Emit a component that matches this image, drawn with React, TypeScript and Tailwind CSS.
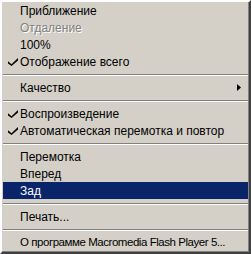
import React from "react";

type Item =
  | { type: "sep" }
  | {
      type: "item";
      label: string;
      checked?: boolean;
      disabled?: boolean;
      active?: boolean;
      submenu?: boolean;
      tight?: boolean;
    };

const items: Item[] = [
  { type: "item", label: "Приближение" },
  { type: "item", label: "Отдаление", disabled: true },
  { type: "item", label: "100%" },
  { type: "item", label: "Отображение всего", checked: true },
  { type: "sep" },
  { type: "item", label: "Качество", submenu: true },
  { type: "sep" },
  { type: "item", label: "Воспроизведение", checked: true },
  { type: "item", label: "Автоматическая перемотка и повтор", checked: true },
  { type: "sep" },
  { type: "item", label: "Перемотка" },
  { type: "item", label: "Вперед" },
  { type: "item", label: "Зад", active: true },
  { type: "sep" },
  { type: "item", label: "Печать..." },
  { type: "sep" },
  { type: "item", label: "О программе Macromedia Flash Player 5...", tight: true },
];

function Check() {
  return (
    <svg width="10" height="8" viewBox="0 0 10 8" className="absolute left-[5px] top-[5px]">
      <path d="M0 3.2 L3.5 6.2 L10 0 L10 2.6 L3.5 8 L0 5.4 Z" fill="#000" />
    </svg>
  );
}

function Arrow() {
  return (
    <svg width="4" height="7" viewBox="0 0 4 7" className="absolute right-[7px] top-[5px]">
      <path d="M0 0 L4 3.5 L0 7 Z" fill="#000" />
    </svg>
  );
}

export default function App() {
  return (
    <div
      className="w-[251px] h-[254px] bg-[#d4d0c8] border-t-2 border-l-2 border-r-2 border-b-2 border-t-white border-l-white border-r-[#404040] border-b-[#404040] overflow-hidden"
      style={{ fontFamily: '"Liberation Sans", Arial, sans-serif' }}
    >
      <div className="h-full border-r border-b border-r-[#808080] border-b-[#808080] pl-[1px] flex flex-col">
        {items.map((it, i) =>
          it.type === "sep" ? (
            <div key={i} className="h-[9px] shrink-0 flex flex-col justify-center">
              <div className="h-px bg-[#808080]" />
              <div className="h-px bg-white" />
            </div>
          ) : (
            <div
              key={i}
              className={
                "relative h-[17px] shrink-0 flex items-center pl-[17px] leading-none whitespace-nowrap " +
                (it.tight ? "text-[11.5px] tracking-[-0.45px] " : "text-[12px] ") +
                (it.active ? "bg-[#0a246a] text-white" : it.disabled ? "text-[#808080]" : "text-black")
              }
              style={it.disabled ? { textShadow: "1px 1px 0 #fff" } : undefined}
            >
              {it.checked && <Check />}
              <span>{it.label}</span>
              {it.submenu && <Arrow />}
            </div>
          )
        )}
      </div>
    </div>
  );
}
